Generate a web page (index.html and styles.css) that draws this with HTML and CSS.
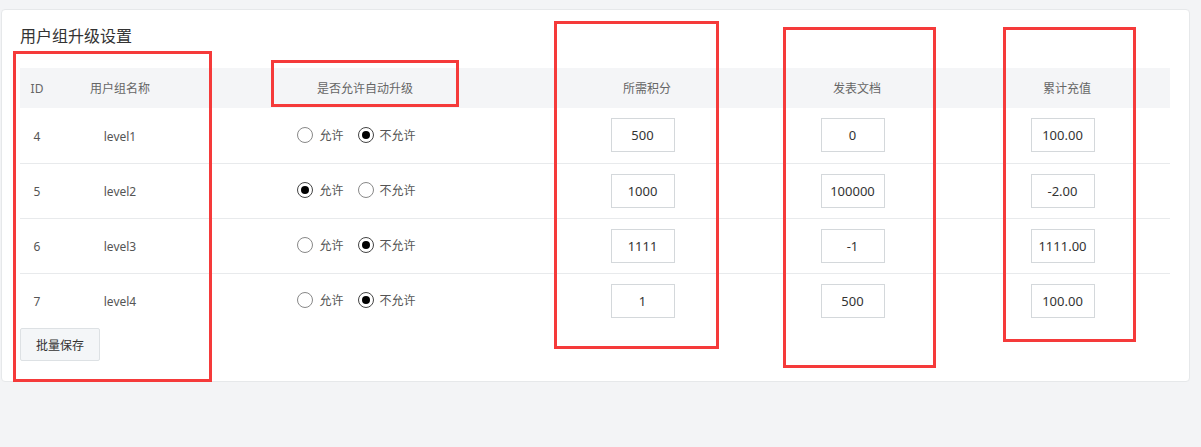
FILE: index.html
```html
<!DOCTYPE html>
<html lang="zh-CN">
<head>
<meta charset="utf-8">
<title>用户组升级设置</title>
<link rel="stylesheet" href="styles.css">
</head>
<body>
<div class="card">
  <h2 class="title">用户组升级设置</h2>
  <table class="grid">
    <colgroup>
      <col class="c-id"><col class="c-name"><col class="c-allow"><col class="c-pts"><col class="c-docs"><col class="c-pay">
    </colgroup>
    <thead>
      <tr><th>ID</th><th>用户组名称</th><th>是否允许自动升级</th><th>所需积分</th><th>发表文档</th><th>累计充值</th></tr>
    </thead>
    <tbody>
      <tr>
        <td>4</td><td>level1</td>
        <td class="radios"><span class="radio"><i class="dot"></i>允许</span><span class="radio"><i class="dot on"></i>不允许</span></td>
        <td class="inp"><span class="box">500</span></td>
        <td class="inp"><span class="box">0</span></td>
        <td class="inp"><span class="box">100.00</span></td>
      </tr>
      <tr>
        <td>5</td><td>level2</td>
        <td class="radios"><span class="radio"><i class="dot on"></i>允许</span><span class="radio"><i class="dot"></i>不允许</span></td>
        <td class="inp"><span class="box">1000</span></td>
        <td class="inp"><span class="box">100000</span></td>
        <td class="inp"><span class="box">-2.00</span></td>
      </tr>
      <tr>
        <td>6</td><td>level3</td>
        <td class="radios"><span class="radio"><i class="dot"></i>允许</span><span class="radio"><i class="dot on"></i>不允许</span></td>
        <td class="inp"><span class="box">1111</span></td>
        <td class="inp"><span class="box">-1</span></td>
        <td class="inp"><span class="box">1111.00</span></td>
      </tr>
      <tr class="last">
        <td>7</td><td>level4</td>
        <td class="radios"><span class="radio"><i class="dot"></i>允许</span><span class="radio"><i class="dot on"></i>不允许</span></td>
        <td class="inp"><span class="box">1</span></td>
        <td class="inp"><span class="box">500</span></td>
        <td class="inp"><span class="box">100.00</span></td>
      </tr>
    </tbody>
  </table>
  <button class="btn">批量保存</button>
</div>
<div class="mark m1"></div>
<div class="mark m2"></div>
<div class="mark m3"></div>
<div class="mark m4"></div>
<div class="mark m5"></div>
</body>
</html>
```
FILE: styles.css
```css
* { box-sizing: border-box; }
html, body { margin: 0; padding: 0; }
body {
  background: #f3f4f6;
  font-family: "Noto Sans", "Noto Sans CJK SC", sans-serif;
  color: #555;
  width: 1201px;
  height: 447px;
  position: relative;
  padding-top: 9px;
  padding-left: 1px;
}
.card {
  width: 1189px;
  background: #fff;
  border: 1px solid #e6e8ea;
  border-radius: 4px;
  padding: 15px 19px 20px 18px;
}
.title {
  margin: 0 0 21px 0;
  font-size: 16px;
  font-weight: normal;
  line-height: 22px;
  color: #333;
}
.grid {
  width: 1150px;
  table-layout: fixed;
  border-collapse: collapse;
  font-size: 12px;
}
.c-id { width: 34px; }
.c-name { width: 132px; }
.c-allow { width: 358px; }
.c-pts { width: 206px; }
.c-docs { width: 214px; }
.c-pay { width: 206px; }
.grid th {
  background: #f4f5f7;
  height: 40px;
  font-weight: normal;
  color: #666;
  text-align: center;
  padding: 0;
}
.grid td {
  height: 55px;
  text-align: center;
  padding: 2px 0 0 0;
  border-bottom: 1px solid #e8eaec;
  color: #555;
}
.grid tr.last td { border-bottom: none; }
.grid td.inp { padding: 0 9px 0 0; }
.box {
  display: inline-flex;
  align-items: center;
  justify-content: center;
  width: 64px;
  height: 34px;
  border: 1px solid #d4d8db;
  font-size: 13px;
  color: #333;
  background: #fff;
}
.radios { white-space: nowrap; }
.radio {
  display: inline-flex;
  align-items: center;
  margin-right: 14px;
  color: #555;
}
.radio:last-child { margin-right: 0; padding-right: 17px; }
.dot {
  width: 16px;
  height: 16px;
  border: 1px solid #888;
  border-radius: 50%;
  margin-right: 6px;
  position: relative;
  background: #fff;
}
.dot.on { border-color: #444; }
.dot.on::after {
  content: "";
  position: absolute;
  left: 3px;
  top: 3px;
  width: 8px;
  height: 8px;
  border-radius: 50%;
  background: #000;
}
.btn {
  display: block;
  width: 80px;
  height: 33px;
  background: #f4f6f8;
  border: 1px solid #dde1e4;
  border-radius: 2px;
  font-family: "Noto Sans CJK SC", sans-serif;
  font-size: 12px;
  color: #333;
  padding: 0;
}
.mark {
  position: absolute;
  border: 3px solid #f53a3a;
}
.m1 { left: 13px; top: 51px; width: 199px; height: 331px; }
.m2 { left: 271px; top: 60px; width: 188px; height: 47px; }
.m3 { left: 554px; top: 21px; width: 165px; height: 328px; }
.m4 { left: 783px; top: 27px; width: 153px; height: 341px; }
.m5 { left: 1003px; top: 27px; width: 133px; height: 315px; }
```
